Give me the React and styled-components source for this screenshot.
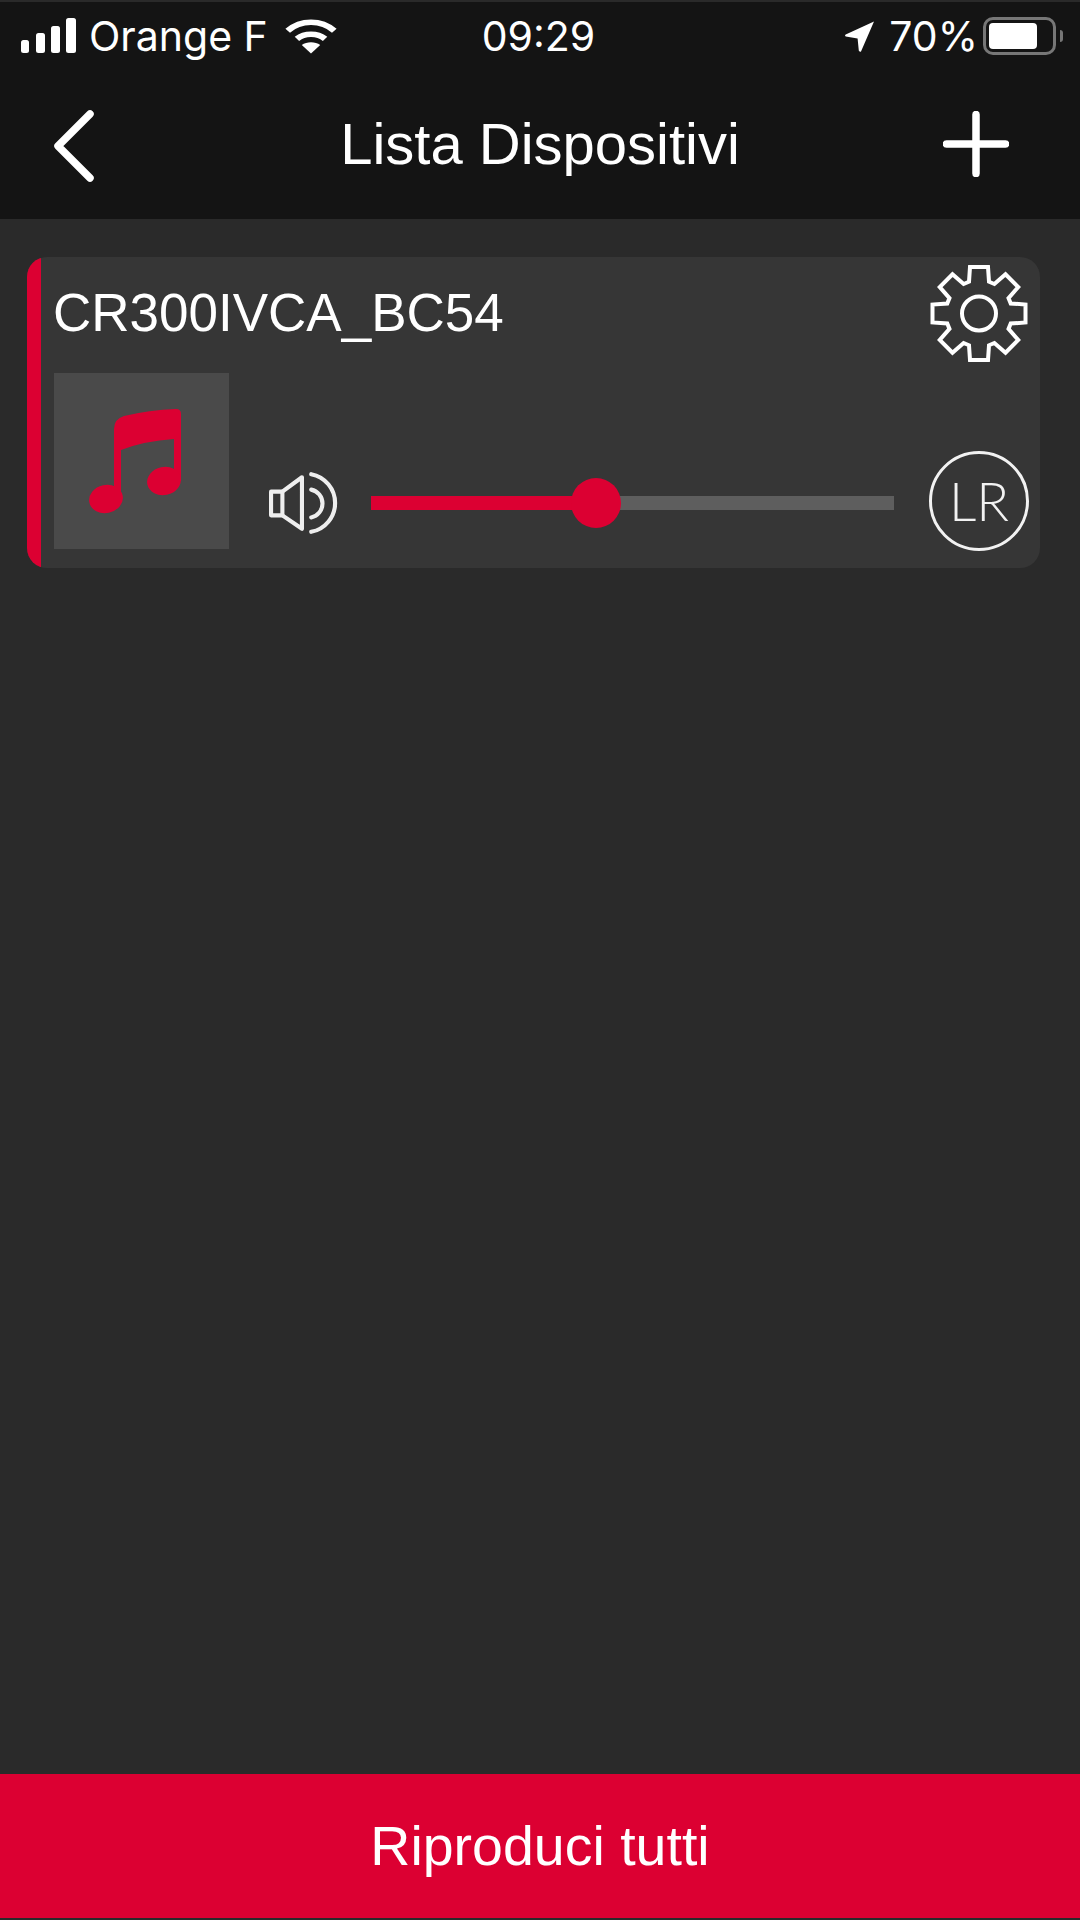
import React from "react";
import styled, { createGlobalStyle } from "styled-components";

const RED = "#dc0032";

const Global = createGlobalStyle`
  html, body { margin: 0; padding: 0; background: #2a2a2a; }
  * { box-sizing: border-box; }
`;

const Screen = styled.div`
  width: 1080px;
  height: 1920px;
  padding-bottom: 2px;
  display: flex;
  flex-direction: column;
  background: #2a2a2a;
  color: #fff;
  font-family: "Liberation Sans", Arial, sans-serif;
  overflow: hidden;
`;

const Header = styled.header`
  height: 217px;
  margin-top: 2px;
  background: #141414;
  flex: none;
`;

const StatusBar = styled.div`
  height: 68px;
  padding: 0 24px 0 21px;
  display: grid;
  grid-template-columns: 1fr auto 1fr;
  align-items: center;
  font-family: Inter, "Liberation Sans", sans-serif;
  font-size: 41px;
  color: #fff;
`;

const StatusLeft = styled.div`
  display: flex;
  align-items: center;
  gap: 17px;
  & > svg:first-child { margin-right: -5px; }
`;

const StatusRight = styled.div`
  display: flex;
  align-items: center;
  justify-content: flex-end;
  gap: 14px;
`;

const StatusText = styled.span`
  line-height: 1;
`;

const Battery = styled.div`
  position: relative;
  width: 73px;
  height: 38px;
  margin-left: -9px;
  border: 3px solid #777;
  border-radius: 10px;
  padding: 3px;
  &::after {
    content: "";
    position: absolute;
    right: -10px;
    top: 10px;
    width: 3px;
    height: 12px;
    background: #777;
    border-radius: 0 3px 3px 0;
  }
`;

const BatteryFill = styled.div`
  width: 78%;
  height: 100%;
  background: #fff;
  border-radius: 4px;
`;

const NavBar = styled.nav`
  height: 147px;
  padding: 0 52px;
  display: grid;
  grid-template-columns: 1fr auto 1fr;
  align-items: center;
`;

const NavTitle = styled.h1`
  margin: 0;
  font-size: 58px;
  font-weight: 400;
  line-height: 1;
  color: #fff;
`;

const NavEnd = styled.div`
  display: flex;
  justify-content: flex-end;
  padding-right: 19px;
`;

const Content = styled.main`
  flex: 1;
  padding: 38px 40px 0 27px;
`;

const Card = styled.section`
  position: relative;
  height: 311px;
  background: #363636;
  border-radius: 20px;
  overflow: hidden;
  padding: 7px 11px 17px 27px;
  display: flex;
  flex-direction: column;
  gap: 10px;
  &::before {
    content: "";
    position: absolute;
    left: 0;
    top: 0;
    bottom: 0;
    width: 14px;
    background: ${RED};
  }
`;

const CardTop = styled.div`
  display: flex;
  align-items: flex-start;
  justify-content: space-between;
`;

const DeviceName = styled.h2`
  margin: 0 0 0 -1px;
  padding: 20px 0 0 0;
  font-size: 53px;
  font-weight: 400;
  line-height: 1.1;
  color: #fff;
`;

const CardBottom = styled.div`
  flex: 1;
  display: flex;
  align-items: flex-end;
`;

const Thumb = styled.div`
  width: 175px;
  height: 176px;
  margin-bottom: 2px;
  margin-right: 40px;
  background: #4a4a4a;
  flex: none;
  svg { display: block; }
`;

const Controls = styled.div`
  flex: 1;
  height: 100px;
  display: flex;
  align-items: center;
`;

const SpeakerSlot = styled.div`
  margin-top: 4px;
  flex: none;
`;

const Slider = styled.div`
  position: relative;
  width: 523px;
  height: 14px;
  margin: 3px 35px 0 33px;
  background: #5e5e5e;
`;

const SliderFill = styled.div`
  height: 100%;
  background: ${RED};
`;

const Knob = styled.div`
  position: absolute;
  top: 50%;
  width: 50px;
  height: 50px;
  border-radius: 50%;
  background: ${RED};
  transform: translate(-50%, -50%);
`;

const LrBadge = styled.div`
  width: 100px;
  height: 100px;
  flex: none;
  border: 3px solid #f2f2f2;
  border-radius: 50%;
  display: flex;
  align-items: center;
  justify-content: center;
  font-family: Lato, "Liberation Sans", sans-serif;
  font-weight: 300;
  font-size: 54px;
  line-height: 1;
  color: #f2f2f2;
`;

const Footer = styled.button`
  flex: none;
  height: 144px;
  width: 100%;
  border: 0;
  padding: 0;
  background: ${RED};
  color: #fff;
  font-family: "Liberation Sans", Arial, sans-serif;
  font-size: 55.5px;
  font-weight: 400;
`;

const IconSvg = styled.svg`
  display: block;
  flex: none;
`;

const gearPath = (() => {
  const cx = 48, cy = 49.5, teeth = 8, ro = 46.5, rr = 33, hw = 9;
  const pts = [];
  for (let i = 0; i < teeth; i++) {
    const a = (i * 2 * Math.PI) / teeth - Math.PI / 2;
    const ux = Math.cos(a), uy = Math.sin(a), vx = -uy, vy = ux;
    const rootOff = Math.sqrt(rr * rr - 81);
    const p = (r, s) => `${(cx + ux * r + vx * s).toFixed(2)} ${(cy + uy * r + vy * s).toFixed(2)}`;
    pts.push(p(rootOff, -hw - 1), p(ro, -hw), p(ro, hw), p(rootOff, hw + 1));
  }
  return "M" + pts.join("L") + "Z";
})();

const Signal = () => (
  <IconSvg width="56" height="36" viewBox="0 0 56 36" fill="#fff">
    <rect x="0" y="22" width="8" height="13" rx="2.5" />
    <rect x="15" y="15" width="9" height="20" rx="2.5" />
    <rect x="30" y="8" width="9" height="27" rx="2.5" />
    <rect x="45" y="0" width="10" height="35" rx="2.5" />
  </IconSvg>
);

const Wifi = () => (
  <IconSvg width="52" height="36" viewBox="0 0 48 38" preserveAspectRatio="none" fill="none" stroke="#fff" strokeWidth="6">
    <path d="M2.5 13.5C14.5 1.5 33.5 1.5 45.5 13.5" />
    <path d="M11 22C18 15.5 30 15.5 37 22" />
    <path d="M24 37.5L15.5 28.5C20 24.5 28 24.5 32.5 28.5Z" fill="#fff" stroke="none" />
  </IconSvg>
);

const LocationArrow = () => (
  <IconSvg width="30" height="31" viewBox="0 0 30 31" fill="#fff">
    <path d="M29 0.5L16 30.5C15.2 31 14 30.6 13.8 29.6L12.6 17.6L0.8 15.6C-0.2 15.2 -0.2 14 0.7 13.6Z" />
  </IconSvg>
);

const BackIcon = () => (
  <IconSvg width="42" height="76" viewBox="0 0 42 76" fill="none" stroke="#fff" strokeWidth="7.5" strokeLinecap="round" strokeLinejoin="round">
    <path d="M38 8L6 40L38 72" />
  </IconSvg>
);

const PlusIcon = () => (
  <IconSvg width="66" height="66" viewBox="0 0 66 66" fill="none" stroke="#fff" strokeWidth="7.5" strokeLinecap="round">
    <path d="M33 3.5V62.5M3.5 33H62.5" />
  </IconSvg>
);

const GearIcon = () => (
  <IconSvg width="100" height="99" viewBox="0 0 96 99" fill="none" stroke="#fff" strokeWidth="4">
    <path d={gearPath} />
    <circle cx="48" cy="49.5" r="17" />
  </IconSvg>
);

const NoteIcon = () => (
  <svg width="175" height="176" viewBox="0 0 175 176" fill={RED}>
    <path d="M60 126V56Q60 46 70 43Q95 37 122 36Q127 36 127 41V108H120V66Q90 68 67 77V126Z" />
    <ellipse cx="52" cy="126" rx="17" ry="14" transform="rotate(-12 52 126)" />
    <ellipse cx="110" cy="108" rx="17" ry="14" transform="rotate(-12 110 108)" />
  </svg>
);

const SpeakerIcon = () => (
  <IconSvg width="69" height="62" viewBox="0 0 67 60" fill="none" stroke="#eee" strokeWidth="4" strokeLinejoin="round" strokeLinecap="round">
    <path d="M13 19H2V42H13L32 55V5L13 19Z" />
    <path d="M13 19V42" />
    <path d="M41 17A13.8 13.8 0 0 1 41 44" />
    <path d="M41 2A28.5 28.5 0 0 1 41 58" />
  </IconSvg>
);

export default function App() {
  const volume = 43;
  return (
    <Screen>
      <Global />
      <Header>
        <StatusBar>
          <StatusLeft>
            <Signal />
            <StatusText>Orange F</StatusText>
            <Wifi />
          </StatusLeft>
          <StatusText>09:29</StatusText>
          <StatusRight>
            <LocationArrow />
            <StatusText>70%</StatusText>
            <Battery>
              <BatteryFill />
            </Battery>
          </StatusRight>
        </StatusBar>
        <NavBar>
          <BackIcon />
          <NavTitle>Lista Dispositivi</NavTitle>
          <NavEnd>
            <PlusIcon />
          </NavEnd>
        </NavBar>
      </Header>
      <Content>
        <Card>
          <CardTop>
            <DeviceName>CR300IVCA_BC54</DeviceName>
            <GearIcon />
          </CardTop>
          <CardBottom>
            <Thumb>
              <NoteIcon />
            </Thumb>
            <Controls>
              <SpeakerSlot>
                <SpeakerIcon />
              </SpeakerSlot>
              <Slider>
                <SliderFill style={{ width: `${volume}%` }} />
                <Knob style={{ left: `${volume}%` }} />
              </Slider>
              <LrBadge>LR</LrBadge>
            </Controls>
          </CardBottom>
        </Card>
      </Content>
      <Footer>Riproduci tutti</Footer>
    </Screen>
  );
}
